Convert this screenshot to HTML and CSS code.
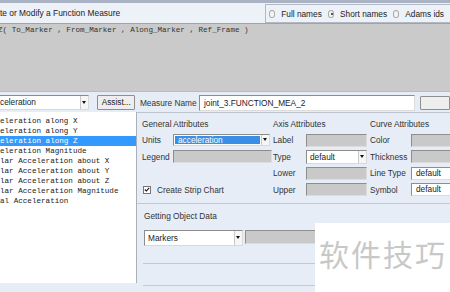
FILE: index.html
```html
<!DOCTYPE html>
<html>
<head>
<meta charset="utf-8">
<link rel="stylesheet" href="styles.css">
</head>
<body>
<div class="win">
  <div class="frame"></div>
  <div class="header">
    <div class="title">te or Modify a Function Measure</div>
    <div class="radios">
      <span class="radio"></span><span class="rlabel">Full names</span>
      <span class="radio on"></span><span class="rlabel">Short names</span>
      <span class="radio"></span><span class="rlabel">Adams ids</span>
    </div>
  </div>
  <div class="formula">Z( To_Marker , From_Marker , Along_Marker , Ref_Frame )</div>
  <div class="toprow">
    <div class="combo c-left"><span class="val">celeration</span><span class="arrow"></span></div>
    <div class="btn assist">Assist...</div>
    <span class="lbl mname">Measure Name</span>
    <div class="field white mfield">joint_3.FUNCTION_MEA_2</div>
    <div class="btn stub"></div>
  </div>
  <div class="main">
    <ul class="list">
      <li>eleration along X</li>
      <li>eleration along Y</li>
      <li class="sel">eleration along Z</li>
      <li>eleration Magnitude</li>
      <li>lar Acceleration about X</li>
      <li>lar Acceleration about Y</li>
      <li>lar Acceleration about Z</li>
      <li>lar Acceleration Magnitude</li>
      <li>al Acceleration</li>
    </ul>
    <div class="panel">
      <div class="attrs">
        <div class="col general">
          <div class="head">General Attributes</div>
          <div class="row"><span class="lbl">Units</span><div class="combo c-units"><span class="val hl">acceleration</span><span class="arrow"></span></div></div>
          <div class="row"><span class="lbl">Legend</span><div class="field gray f-legend"></div></div>
          <div class="row"></div>
          <div class="row chk"><span class="checkbox"><svg width="7" height="7" viewBox="0 0 7 7"><path d="M1 3.5 L2.8 5.3 L6 1.5" fill="none" stroke="#111" stroke-width="1.3"/></svg></span><span class="lbl">Create Strip Chart</span></div>
        </div>
        <div class="col axis">
          <div class="head">Axis Attributes</div>
          <div class="row"><span class="lbl">Label</span><div class="field gray f-axis"></div></div>
          <div class="row"><span class="lbl">Type</span><div class="combo c-axis"><span class="val">default</span><span class="arrow"></span></div></div>
          <div class="row"><span class="lbl">Lower</span><div class="field gray f-axis"></div></div>
          <div class="row"><span class="lbl">Upper</span><div class="field gray f-axis"></div></div>
        </div>
        <div class="col curve">
          <div class="head">Curve Attributes</div>
          <div class="row"><span class="lbl">Color</span><div class="field gray f-curve"></div></div>
          <div class="row"><span class="lbl">Thickness</span><div class="field gray f-curve"></div></div>
          <div class="row"><span class="lbl">Line Type</span><div class="field white f-curve">default</div></div>
          <div class="row"><span class="lbl">Symbol</span><div class="field white f-curve">default</div></div>
        </div>
      </div>
      <div class="obj">
        <div class="head">Getting Object Data</div>
        <div class="objrow">
          <div class="combo c-markers"><span class="val">Markers</span><span class="arrow"></span></div>
          <div class="field gray f-obj"></div>
        </div>
        <div class="sep s1"></div>
        <div class="sep s2"></div>
      </div>
    </div>
  </div>
  <div class="wm">软件技巧</div>
</div>
</body>
</html>
```

FILE: styles.css
```css
* { box-sizing: border-box; }
html, body { margin: 0; padding: 0; }
body {
  width: 450px;
  height: 292px;
  overflow: hidden;
  background: #e6edf6;
  font-family: "Liberation Sans", Arial, sans-serif;
  font-size: 8.3px;
  color: #333;
}
.win { position: relative; width: 450px; height: 292px; overflow: hidden; }
.frame { height: 3px; background: #a9b3c4; }
.header {
  height: 20px;
  display: flex;
  align-items: flex-start;
  background: #edf1f8;
}
.title {
  font-size: 8.4px;
  line-height: 14px;
  padding-top: 3px;
  color: #222;
  white-space: nowrap;
}
.radios {
  margin-left: auto;
  width: 185px;
  height: 19px;
  margin-top: 1px;
  border: 1px solid #b2b9c4;
  border-right: none;
  display: flex;
  align-items: center;
  padding-left: 3px;
  white-space: nowrap;
  color: #222;
}
.radio {
  width: 8px; height: 8px;
  border-radius: 50%;
  border: 1px solid #a7a7a7;
  background: #f4f4f4;
  margin-right: 6px;
  position: relative;
}
.radio.on::after {
  content: "";
  position: absolute;
  left: 2px; top: 2px;
  width: 2px; height: 2px;
  border-radius: 50%;
  background: #222;
}
.rlabel { margin-right: 6px; }
.formula {
  height: 69px;
  border-top: 1px solid #9ea3aa;
  border-bottom: 1px solid #b7bcc4;
  background: #cacaca;
  font-family: "Liberation Mono", "Courier New", monospace;
  font-size: 7.6px;
  line-height: 10px;
  padding-top: 1px;
  margin-left: -2px;
  color: #333;
  white-space: nowrap;
}
.toprow {
  height: 20px;
  display: flex;
  align-items: center;
  padding-top: 1px;
}
.combo {
  height: 15px;
  display: flex;
  background: #fff;
  border: 1px solid #8c8c8c;
  border-right-color: #d9d9d9;
  border-bottom-color: #d9d9d9;
}
.combo .val {
  flex: 1;
  line-height: 13px;
  padding-left: 3px;
  white-space: nowrap;
  overflow: hidden;
  color: #222;
}
.combo .val.hl {
  background: #3a8ee6;
  color: #fff;
  margin: 1px;
  line-height: 9px;
}
.arrow {
  width: 8px;
  border-left: 1px solid #c8c8c8;
  background: #f6f6f6;
  position: relative;
}
.arrow::after {
  content: "";
  position: absolute;
  left: 1px; top: 5px;
  border-left: 2.5px solid transparent;
  border-right: 2.5px solid transparent;
  border-top: 3px solid #111;
}
.c-left { width: 95px; margin-left: -4px; }
.btn {
  height: 15px;
  border: 1px solid #8f8f8f;
  background: #eeeeee;
  border-radius: 1px;
  line-height: 13px;
  text-align: center;
  color: #222;
}
.assist { width: 38px; margin-left: 8px; }
.lbl { white-space: nowrap; color: #333; }
.mname { width: 60px; margin-left: 5px; }
.field {
  height: 13px;
  border: 1px solid #8e8e8e;
  border-right-color: #dcdcdc;
  border-bottom-color: #dcdcdc;
  line-height: 11px;
  padding-left: 4px;
  white-space: nowrap;
  overflow: hidden;
  color: #222;
}
.field.white { background: #fff; }
.field.gray { background: #c9c9c9; }
.mfield { width: 220px; height: 16px; line-height: 14px; }
.stub { width: 30px; margin-left: 5px; height: 14px; }
.main {
  display: grid;
  grid-template-columns: 137px 1fr;
  height: 179px;
}
.list {
  list-style: none;
  margin: 0;
  padding: 4px 0 0 0;
  height: 171px;
  background: #fff;
  border-right: 1px solid #a9b0ba;
  font-family: "Liberation Mono", "Courier New", monospace;
  font-size: 7.6px;
  line-height: 10px;
  color: #222;
  white-space: nowrap;
  overflow: hidden;
}
.list li.sel { background: #3399ff; color: #fff; }
.panel {
  border-top: 1px solid #bfc5ce;
}
.attrs {
  display: flex;
  height: 91px;
  border-bottom: 1px solid #c3c9d1;
  padding-left: 5px;
  padding-top: 4px;
}
.col { display: flex; flex-direction: column; }
.general { width: 131px; }
.axis { width: 97px; }
.curve { flex: 1; }
.head { height: 15px; line-height: 15px; color: #333; white-space: nowrap; }
.row {
  height: 16.5px;
  display: flex;
  align-items: center;
}
.general .lbl { width: 31px; }
.axis .lbl { width: 33px; }
.curve .lbl { width: 41px; }
.c-units { width: 97px; height: 12px; }
.c-units .arrow::after { top: 3px; }
.f-legend { width: 99px; }
.f-axis { width: 61px; }
.c-axis { width: 61px; height: 14px; }
.c-axis .val { line-height: 12px; }
.c-axis .arrow::after { top: 4px; }
.f-curve { width: 50px; }
.chk .checkbox {
  width: 8px; height: 8px;
  border: 1px solid #777;
  background: #fff;
  margin-left: 1px;
  margin-right: 6px;
  display: flex; align-items: center; justify-content: center;
}
.chk .checkbox svg { display: block; }
.obj { padding-left: 7px; padding-top: 5px; }
.obj .head { height: 15px; }
.objrow { display: flex; margin-top: 6px; }
.c-markers { width: 99px; height: 16px; }
.c-markers .val { line-height: 14px; }
.c-markers .arrow::after { top: 5px; }
.f-obj { width: 205px; height: 14px; margin-left: 2px; }
.sep { border-bottom: 1px solid #c3c9d1; margin-left: -1px; }
.s1 { height: 18px; }
.s2 { height: 22px; }
.wm {
  position: absolute;
  left: 315px;
  top: 223px;
  width: 135px;
  height: 69px;
  background: #fff;
  font-family: "Noto Sans CJK SC", sans-serif;
  font-size: 30px;
  line-height: 30px;
  color: #c8c8c8;
  padding-left: 4px;
  padding-top: 15px;
  white-space: nowrap;
  letter-spacing: 2px;
}
```
